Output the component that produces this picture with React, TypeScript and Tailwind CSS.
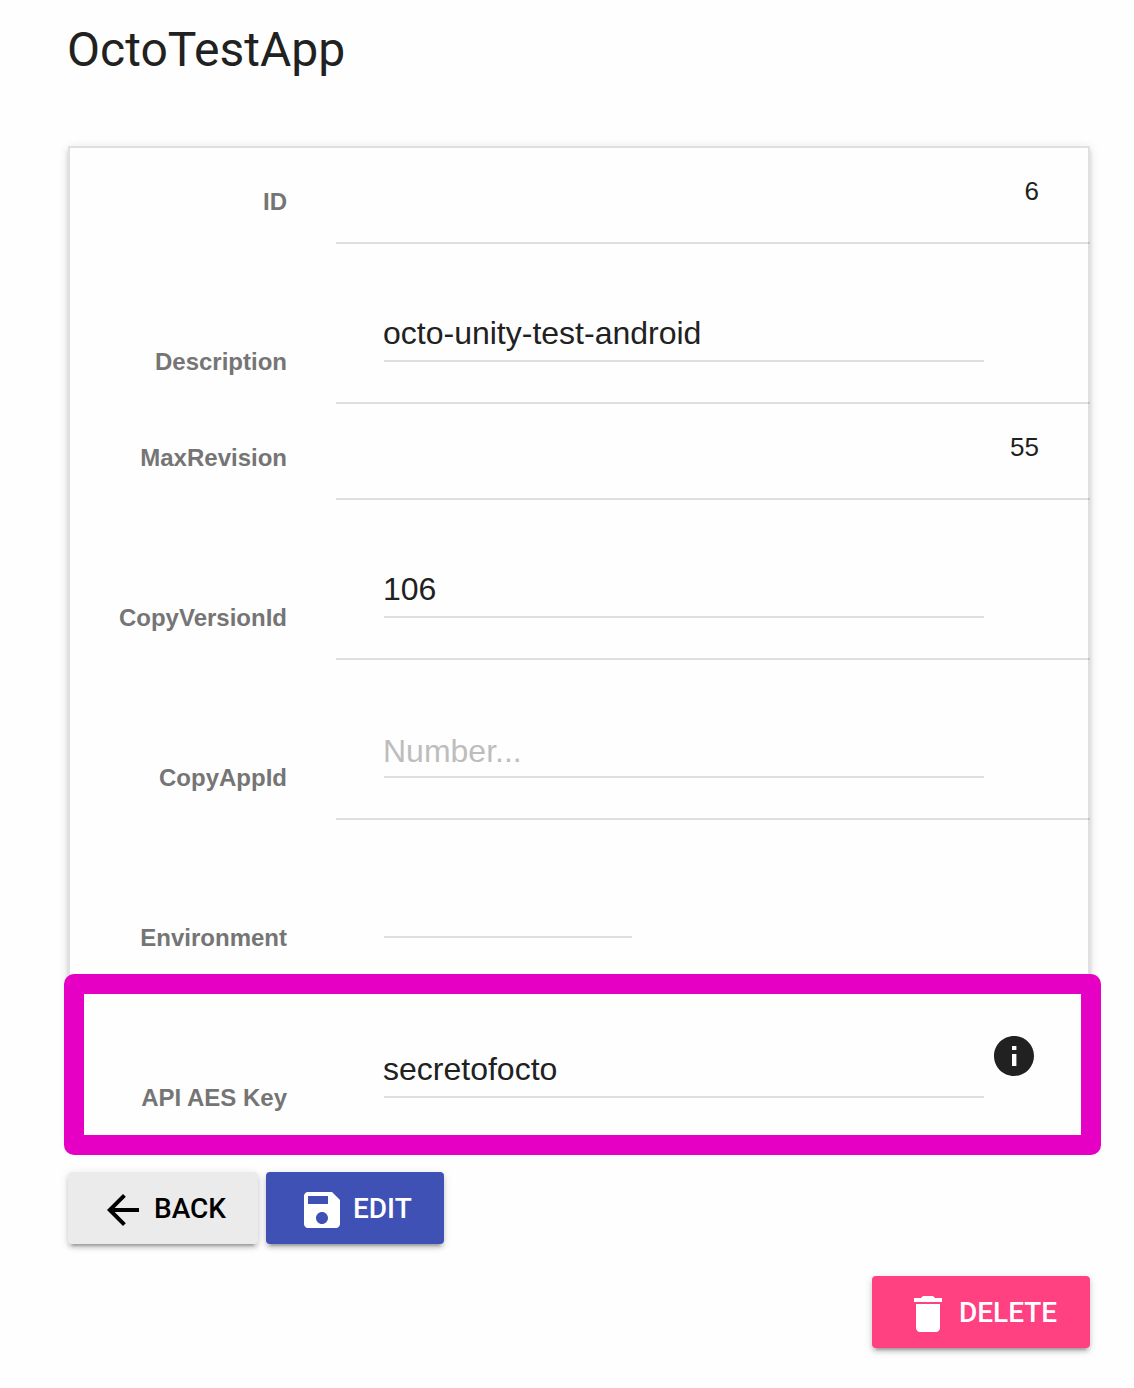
import React from "react";

type Field = {
  label: string;
  value?: string;
  placeholder?: string;
  kind: "number" | "input" | "select";
  info?: boolean;
};

const fields: Field[] = [
  { label: "ID", value: "6", kind: "number" },
  { label: "Description", value: "octo-unity-test-android", kind: "input" },
  { label: "MaxRevision", value: "55", kind: "number" },
  { label: "CopyVersionId", value: "106", kind: "input" },
  { label: "CopyAppId", placeholder: "Number...", kind: "input" },
  { label: "Environment", kind: "select" },
  { label: "API AES Key", value: "secretofocto", kind: "input", info: true },
];

const icons = {
  back: "M20 11H7.83l5.59-5.59L12 4l-8 8 8 8 1.41-1.41L7.83 13H20v-2z",
  save: "M17 3H5c-1.11 0-2 .9-2 2v14c0 1.1.89 2 2 2h14c1.1 0 2-.9 2-2V7l-4-4zm-5 16c-1.66 0-3-1.34-3-3s1.34-3 3-3 3 1.34 3 3-1.34 3-3 3zm3-10H5V5h10v4z",
  remove: "M6 19c0 1.1.9 2 2 2h8c1.1 0 2-.9 2-2V7H6v12zM19 4h-3.5l-1-1h-5l-1 1H5v2h14V4z",
  info: "M12 2C6.48 2 2 6.48 2 12s4.48 10 10 10 10-4.48 10-10S17.52 2 12 2zm1.2 15h-2.2v-6h2.2v6zm0-8h-2.2V7h2.2v2z",
};

function Icon({ d }: { d: string }) {
  return (
    <svg viewBox="0 0 24 24" className="size-12 shrink-0 fill-current">
      <path d={d} />
    </svg>
  );
}

function Row({ field, last }: { field: Field; last: boolean }) {
  const isNumber = field.kind === "number";
  return (
    <div className={isNumber ? "flex h-24" : "flex h-40"}>
      <div className="flex w-[266px] items-end justify-end pr-[49px]">
        <span className="mb-[30px] text-2xl/6 font-bold text-[#757575]">{field.label}</span>
      </div>
      <div
        className={`-mr-[2px] flex flex-1 pl-12 ${
          field.kind === "select" || last ? "" : "border-b-2 border-black/12"
        }`}
      >
        {isNumber && (
          <span className="mt-[30px] ml-auto pr-[51px] text-[26px]/[26px]">{field.value}</span>
        )}
        {field.kind === "input" && (
          <>
            <div className="flex h-[118px] w-[600px] border-b-2 border-black/12 pt-[73px] text-[32px]/[32px]">
              <span className={field.placeholder ? "mt-[2px] -ml-px text-[#bdbdbd]" : "-ml-px"}>
                {field.value ?? field.placeholder}
              </span>
            </div>
            {field.info && (
              <div className="mt-[52px] ml-[6px]">
                <Icon d={icons.info} />
              </div>
            )}
          </>
        )}
        {field.kind === "select" && <div className="h-[118px] w-[248px] border-b-2 border-black/12" />}
      </div>
    </div>
  );
}

function Button({ icon, label, className }: { icon: string; label: string; className: string }) {
  return (
    <button
      className={`flex h-[72px] items-center rounded-[4px] pt-1 font-['Roboto'] text-[28px]/[28px] font-medium shadow-[0_4px_4px_0_rgba(0,0,0,0.14),0_6px_2px_-4px_rgba(0,0,0,0.2),0_2px_10px_0_rgba(0,0,0,0.12)] ${className}`}
    >
      <Icon d={icon} />
      <span className="-mt-[2px]">{label}</span>
    </button>
  );
}

export default function App() {
  return (
    <main className="h-[1388px] w-[1134px] overflow-hidden bg-[#fefefe] pt-[26px] pl-[68px] font-['Liberation_Sans',sans-serif] text-[#212121]">
      <h1 className="-ml-px h-[120px] font-['Roboto'] text-[48px]/[48px]">OctoTestApp</h1>
      <section className="relative h-[998px] w-[1022px] border-2 border-[#e0e0e0] bg-[#fefefe] shadow-[0_4px_4px_0_rgba(0,0,0,0.14),0_6px_2px_-4px_rgba(0,0,0,0.2),0_2px_10px_0_rgba(0,0,0,0.12)]">
        {fields.map((field, i) => (
          <Row key={field.label} field={field} last={i === fields.length - 1} />
        ))}
        <div className="absolute top-[826px] -left-[6px] h-[181px] w-[1037px] rounded-[10px] border-20 border-[#e600c3]" />
      </section>
      <div className="mt-7 flex gap-2">
        <Button icon={icons.back} label="BACK" className="w-[190px] gap-[7px] bg-[#ebebeb] pl-[31px] text-black" />
        <Button icon={icons.save} label="EDIT" className="w-[178px] gap-[7px] bg-[#3f51b5] pl-[32px] text-white" />
      </div>
      <div className="mt-8 flex w-[1022px] justify-end">
        <Button icon={icons.remove} label="DELETE" className="w-[218px] gap-[7px] bg-[#ff4081] pl-[32px] text-white" />
      </div>
    </main>
  );
}
